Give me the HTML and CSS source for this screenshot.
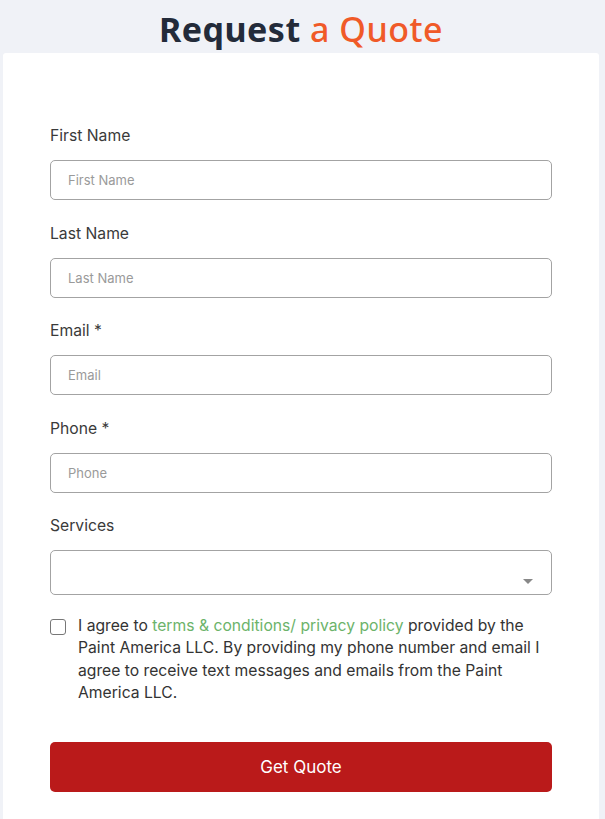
FILE: index.html
```html
<!DOCTYPE html>
<html lang="en">
<head>
<meta charset="utf-8">
<title>Request a Quote</title>
<link rel="stylesheet" href="styles.css">
</head>
<body>
<div class="page">
  <h1 class="title"><span class="dark">Request</span> <span class="accent">a Quote</span></h1>
  <form class="card">
    <div class="field">
      <label class="label">First Name</label>
      <input class="input" type="text" placeholder="First Name">
    </div>
    <div class="field">
      <label class="label">Last Name</label>
      <input class="input" type="text" placeholder="Last Name">
    </div>
    <div class="field">
      <label class="label">Email *</label>
      <input class="input" type="text" placeholder="Email">
    </div>
    <div class="field">
      <label class="label">Phone *</label>
      <input class="input" type="text" placeholder="Phone">
    </div>
    <div class="field">
      <label class="label">Services</label>
      <div class="select">
        <span class="arrow"></span>
      </div>
    </div>
    <div class="agree">
      <span class="checkbox"></span>
      <p class="agree-text">I agree to <a class="link">terms &amp; conditions/ privacy policy</a> provided by the Paint America LLC. By providing my phone number and email I agree to receive text messages and emails from the Paint America LLC.</p>
    </div>
    <button class="submit" type="button">Get Quote</button>
  </form>
</div>
</body>
</html>
```
FILE: styles.css
```css
* { box-sizing: border-box; }
html, body { margin: 0; padding: 0; }
body {
  background: #f0f2f7;
  font-family: Inter, "Liberation Sans", sans-serif;
  color: #333;
}
.page {
  padding: 0 6px 0 3px;
}
.title {
  margin: 0;
  height: 53px;
  padding-top: 9px;
  text-align: center;
  font-family: "Noto Sans", "Open Sans", sans-serif;
  font-size: 34px;
  line-height: 40px;
  letter-spacing: 0.5px;
}
.dark { color: #232b3a; font-weight: 700; }
.accent { color: #f05a28; font-weight: 500; }
.card {
  background: #fff;
  border-radius: 3px;
  padding: 72px 47px 40px 47px;
  display: flex;
  flex-direction: column;
}
.field {
  display: flex;
  flex-direction: column;
  margin-bottom: 22.5px;
}
.label {
  font-size: 15.7px;
  line-height: 22px;
  color: #3a3a3a;
  margin-bottom: 13px;
}
.input {
  height: 40px;
  border: 1px solid #a3a3a3;
  border-radius: 5px;
  padding: 0 17px;
  font-family: Inter, "Liberation Sans", sans-serif;
  font-size: 13px;
  color: #333;
  background: #fff;
  outline: none;
}
.input::placeholder { color: #9a9a9a; }
.select {
  height: 45px;
  border: 1px solid #a3a3a3;
  border-radius: 5px;
  display: flex;
  justify-content: flex-end;
  align-items: flex-end;
  padding: 0 18px 10px 0;
}
.arrow {
  width: 0;
  height: 0;
  border-left: 5px solid transparent;
  border-right: 5px solid transparent;
  border-top: 5px solid #888;
}
.agree {
  display: flex;
  align-items: flex-start;
  gap: 12px;
  margin-top: -3px;
}
.checkbox {
  flex: none;
  width: 16px;
  height: 16px;
  border: 1px solid #777;
  border-radius: 3px;
  margin-top: 4px;
}
.agree-text {
  margin: 0;
  font-size: 15.7px;
  line-height: 22.6px;
  color: #333;
}
.link { color: #6cb36a; }
.submit {
  margin-top: 37px;
  height: 50px;
  border: none;
  border-radius: 5px;
  background: #ba1a1a;
  color: #fff;
  font-family: Inter, "Liberation Sans", sans-serif;
  font-size: 17px;
}
```
